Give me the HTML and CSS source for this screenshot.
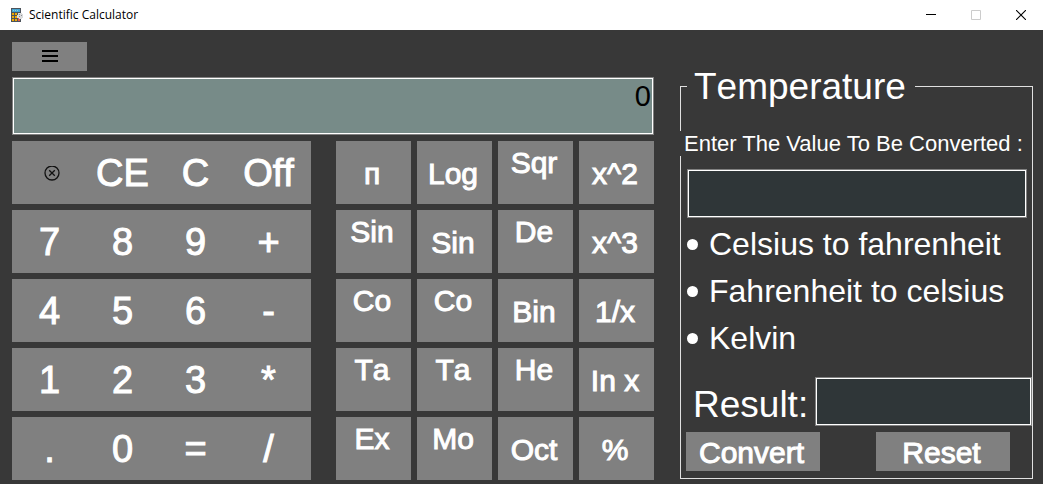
FILE: index.html
```html
<!DOCTYPE html>
<html lang="en">
<head>
<meta charset="utf-8">
<title>Scientific Calculator</title>
<link rel="stylesheet" href="styles.css">
</head>
<body>
<header class="titlebar">
  <svg class="app-icon" width="13" height="14" viewBox="0 0 13 14" shape-rendering="crispEdges" aria-hidden="true">
    <path fill="#4d545c" d="M0 0h10v14H0z"/>
    <path fill="#45a4cf" d="M1 1h8v3H1z"/>
    <path fill="#8ccbe6" d="M2 2h1v1H2zM4 2h1v1H4zM6 2h1v1H6z"/>
    <path fill="#f2a900" d="M1 5h2v2H1zM4 5h2v2H4zM7 5h2v2H7zM1 8h2v2H1zM4 8h2v2H4zM1 11h2v2H1zM4 11h2v2H4z"/>
    <path fill="#e2574c" d="M7 10h2v3H7z"/>
    <path fill="#d9dadb" d="M7 5h4v1h1v4h-1v1H8v-1H6V7h1z"/>
    <path fill="#8d9195" d="M8 6h1v1H8zM10 7h1v1h-1zM8 8h1v1H8z"/>
  </svg>
  <h1 class="title">Scientific Calculator</h1>
  <div class="window-controls">
    <button class="window-button" aria-label="Minimize"><svg width="10" height="10" viewBox="0 0 10 10" shape-rendering="crispEdges"><path fill="#000" d="M0 4h10v1H0z"/></svg></button>
    <button class="window-button" aria-label="Maximize" disabled><svg width="10" height="10" viewBox="0 0 10 10"><path fill="none" stroke="#ccc" d="M.5.5h9v9h-9z"/></svg></button>
    <button class="window-button" aria-label="Close"><svg width="10" height="10" viewBox="0 0 10 10"><path fill="none" stroke="#000" stroke-width="1.1" d="M0 0l10 10M10 0L0 10"/></svg></button>
  </div>
</header>
<main class="app">
  <section class="calculator">
    <button class="menu-button" aria-label="Menu"><svg width="16" height="14" viewBox="0 0 16 14"><path stroke="#000" stroke-width="2" stroke-linecap="square" d="M1 1h14M1 6h14M1 11h14"/></svg></button>
    <input class="field display" type="text" value="0" aria-label="Display">
    <div class="keys">
      <div class="keypad">
        <button class="key" aria-label="Backspace"><svg width="20" height="16" viewBox="0 0 20 16" fill="none" stroke="#111" stroke-width="1.3"><circle cx="12" cy="7" r="7"/><path d="M9.2 4.2l5.6 5.6M14.8 4.2l-5.6 5.6"/></svg></button>
        <button class="key">CE</button>
        <button class="key">C</button>
        <button class="key">Off</button>
      </div>
      <div class="functions">
        <button class="key">п</button>
        <button class="key">Log</button>
        <button class="key raised">Sqr</button>
        <button class="key">x^2</button>
      </div>
      <div class="keypad">
        <button class="key">7</button>
        <button class="key">8</button>
        <button class="key">9</button>
        <button class="key">+</button>
      </div>
      <div class="functions">
        <button class="key raised">Sin</button>
        <button class="key">Sin</button>
        <button class="key raised">De</button>
        <button class="key">x^3</button>
      </div>
      <div class="keypad">
        <button class="key">4</button>
        <button class="key">5</button>
        <button class="key">6</button>
        <button class="key">-</button>
      </div>
      <div class="functions">
        <button class="key raised">Co</button>
        <button class="key raised">Co</button>
        <button class="key">Bin</button>
        <button class="key">1/x</button>
      </div>
      <div class="keypad">
        <button class="key">1</button>
        <button class="key">2</button>
        <button class="key">3</button>
        <button class="key">*</button>
      </div>
      <div class="functions">
        <button class="key raised">Ta</button>
        <button class="key raised">Ta</button>
        <button class="key raised">He</button>
        <button class="key">In x</button>
      </div>
      <div class="keypad">
        <button class="key">.</button>
        <button class="key">0</button>
        <button class="key">=</button>
        <button class="key">/</button>
      </div>
      <div class="functions">
        <button class="key raised">Ex</button>
        <button class="key raised">Mo</button>
        <button class="key">Oct</button>
        <button class="key">%</button>
      </div>
    </div>
  </section>
  <fieldset class="temperature">
    <legend class="legend">Temperature</legend>
    <label class="prompt" for="value">Enter The Value To Be Converted :</label>
    <input class="field value" id="value" type="text">
    <div class="options">
      <label class="option"><input class="radio" type="radio" name="mode">Celsius to fahrenheit</label>
      <label class="option"><input class="radio" type="radio" name="mode">Fahrenheit to celsius</label>
      <label class="option"><input class="radio" type="radio" name="mode">Kelvin</label>
    </div>
    <div class="result-row">
      <label class="result-label" for="result">Result:</label>
      <input class="field result" id="result" type="text">
    </div>
    <div class="actions">
      <button class="action">Convert</button>
      <button class="action">Reset</button>
    </div>
  </fieldset>
</main>
</body>
</html>
```
FILE: styles.css
```css
* {
  box-sizing: border-box;
}

body {
  margin: 0;
  min-height: 100vh;
  background: #383838;
  color: #fff;
  font-family: "Liberation Sans", Arial, sans-serif;
  font-kerning: none;
}

button,
input {
  margin: 0;
  border: 0;
  border-radius: 0;
  padding: 0;
  font: inherit;
  font-kerning: none;
  color: inherit;
}

svg {
  display: block;
}

/* Title bar */
.titlebar {
  display: flex;
  align-items: center;
  height: 30px;
  padding-left: 11px;
  background: #fff;
  color: #000;
}

.title {
  flex: 1;
  margin: 0 0 0 5px;
  font: 400 12px/16px "Open Sans", sans-serif;
}

.window-controls {
  display: flex;
  height: 100%;
}

.window-button {
  display: flex;
  align-items: center;
  justify-content: center;
  width: 45px;
  background: none;
}

/* Layout */
.app {
  display: grid;
  grid-template-columns: 642fr 353fr;
  column-gap: 26px;
  align-items: start;
  padding: 12px 10px 4px 12px;
}

.calculator {
  display: flex;
  flex-direction: column;
  gap: 6px;
}

.menu-button {
  display: flex;
  align-items: center;
  justify-content: center;
  width: 75px;
  height: 29px;
  background: #808080;
}

.field {
  width: 100%;
  border: 1px solid #808080;
  outline: 1px solid #fff;
  outline-offset: -2px;
  background: #2f3638;
}

.display {
  height: 58px;
  padding: 0 2px 20px;
  background: #778b88;
  color: #000;
  font-size: 29px;
  text-align: right;
}

/* Keys */
.keys {
  display: grid;
  grid-template-columns: 299fr 318fr;
  gap: 6px 25px;
}

.keypad,
.functions {
  display: grid;
  grid-template-columns: repeat(4, minmax(0, 1fr));
  height: 63px;
}

.keypad {
  padding: 0 6px 0 1px;
  background: #808080;
  font-size: 38px;
}

.functions {
  gap: 6px;
  font-size: 30px;
}

.key,
.action {
  display: flex;
  align-items: center;
  justify-content: center;
  background: #808080;
  white-space: nowrap;
  -webkit-text-stroke: 1px #fff;
}

.key {
  padding-top: 2px;
}

.functions .key {
  padding-right: 3px;
}

.functions .raised {
  padding-bottom: 22px;
}

/* Temperature converter */
.temperature {
  display: flex;
  flex-direction: column;
  min-width: 0;
  margin: 23px 0 0;
  border: 1px solid #e0e0e0;
  padding: 0 0 7px;
}

.legend {
  margin-left: 6px;
  padding: 0 9px 0 7px;
  font-size: 37px;
  line-height: 43px;
}

.prompt {
  align-self: flex-start;
  margin: 23px 0 0 -1px;
  padding-left: 4px;
  background: #383838;
  font-size: 22px;
  font-kerning: normal;
  line-height: 25px;
  white-space: nowrap;
}

.value {
  align-self: center;
  width: calc(100% - 11px);
  height: 49px;
  margin-top: 13px;
}

.options {
  display: flex;
  flex-direction: column;
  padding: 3px 6px 15px;
}

.option {
  display: flex;
  align-items: center;
  gap: 11px;
  font-size: 32px;
  line-height: 47px;
  white-space: nowrap;
}

.radio {
  appearance: none;
  width: 11px;
  height: 11px;
  border-radius: 50%;
  background: #fff;
}

.result-row {
  display: flex;
  align-items: center;
}

.result-label {
  padding: 6px 7px 0 12px;
  font-size: 37px;
}

.result {
  flex: 1;
  min-width: 0;
  height: 49px;
}

.actions {
  display: flex;
  justify-content: space-between;
  padding: 6px 22px 0 5px;
}

.action {
  width: 134px;
  height: 39px;
  padding: 3px 3px 0 0;
  font-size: 30px;
}
```
